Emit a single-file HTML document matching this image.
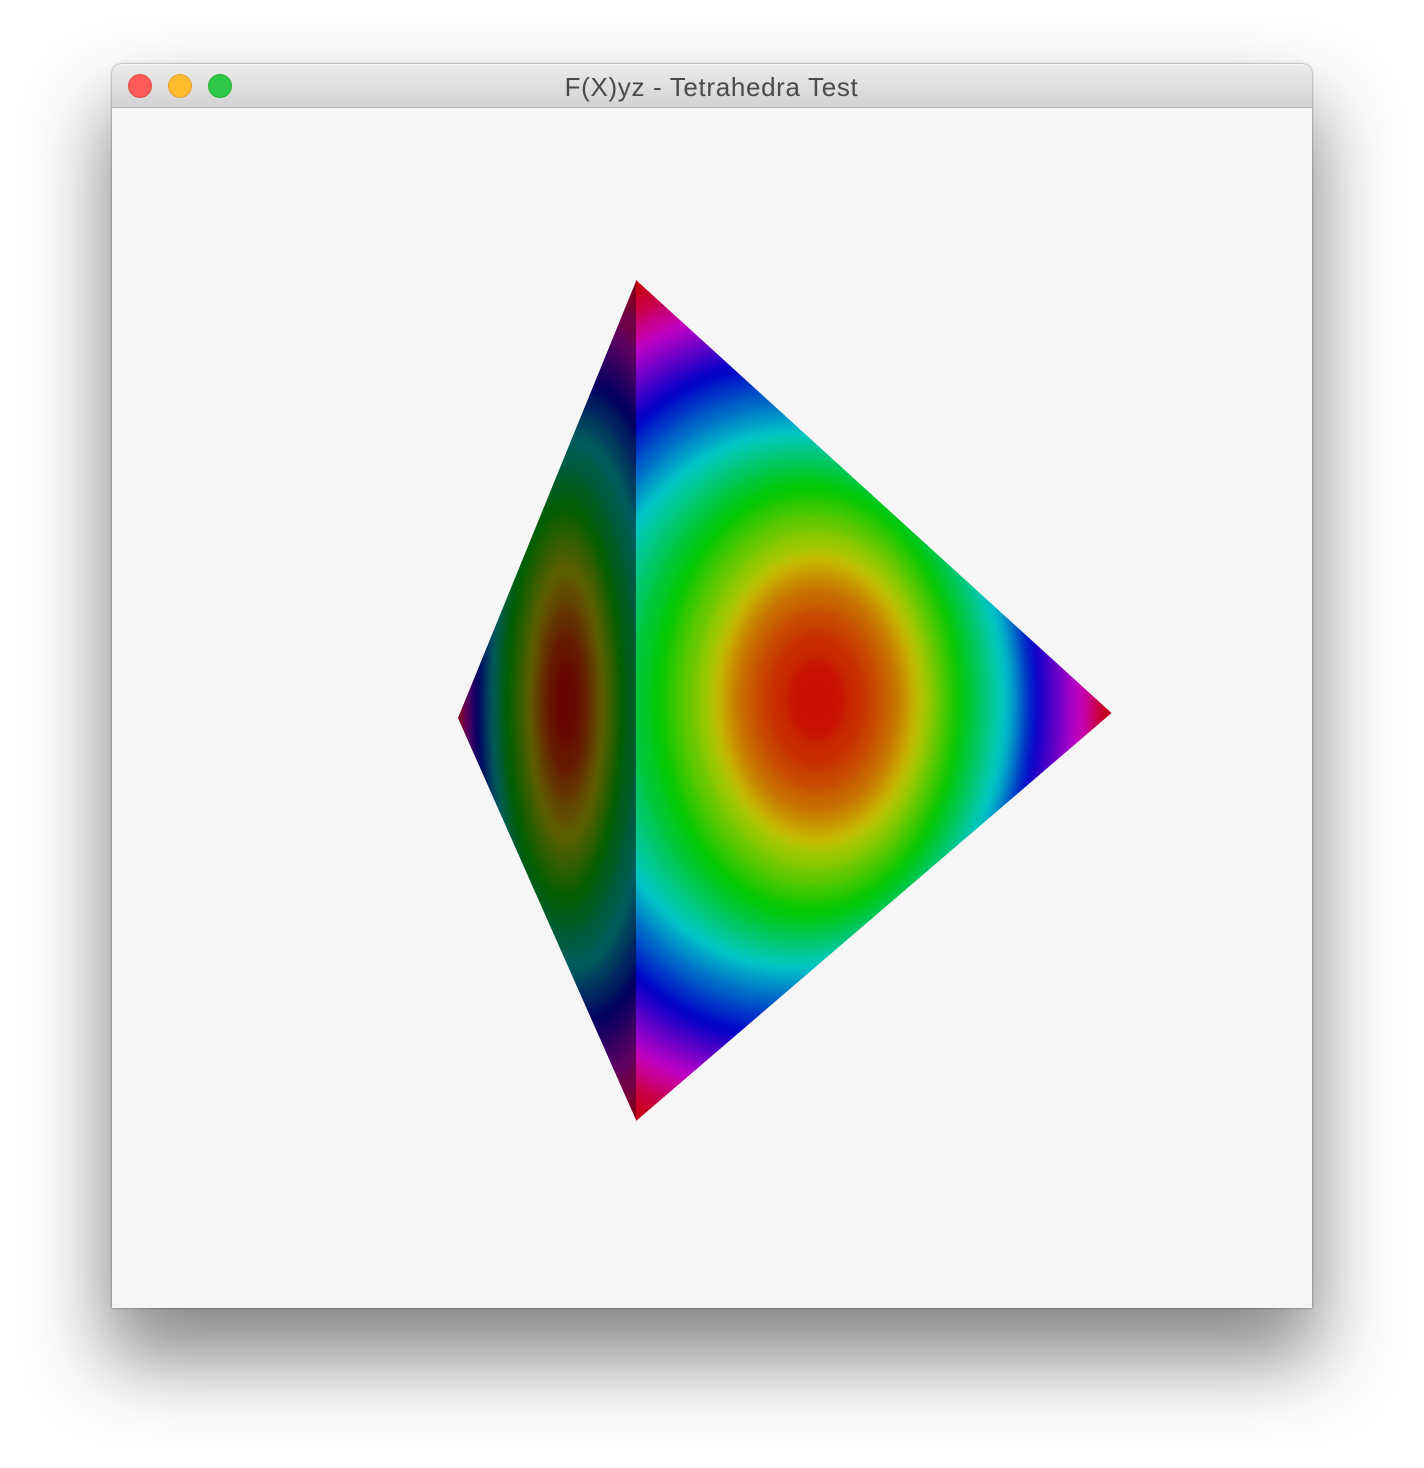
<!DOCTYPE html>
<html><head><meta charset="utf-8"><title>F(X)yz - Tetrahedra Test</title>
<style>
html,body{margin:0;padding:0;width:1424px;height:1468px;overflow:hidden;background:#fff}
#win{position:absolute;left:112px;top:64px;width:1200px;height:1244px;background:#f6f6f6;border-radius:10px 10px 0 0;box-shadow:0 46px 80px 6px rgba(0,0,0,.47),0 0 2px rgba(0,0,0,.55)}
#bar{position:absolute;left:0;top:0;width:1200px;height:43px;border-bottom:1px solid #b4b4b4;border-radius:10px 10px 0 0;background:linear-gradient(#ececec,#d3d3d3);box-shadow:inset 0 1px 0 #f4f4f4}
.l{position:absolute;top:10px;width:22px;height:22px;border-radius:50%;border:1px solid}
#t{position:absolute;left:0;top:6px;width:1199px;text-align:center;font:26px/34px "Liberation Sans",sans-serif;letter-spacing:.66px;color:#4a4a4a;white-space:nowrap}
svg{position:absolute;left:0;top:0}
</style></head><body>
<div id="win"><div id="bar">
<div class="l" style="left:16px;background:#fc5b57;border-color:#e24b41"></div>
<div class="l" style="left:56px;background:#ffbc2f;border-color:#e0a32b"></div>
<div class="l" style="left:96px;background:#30c849;border-color:#27ab37"></div>
<div id="t">F(X)yz - Tetrahedra Test</div>
</div></div>
<svg width="1424" height="1468" viewBox="0 0 1424 1468">
<defs>
<clipPath id="cr"><polygon points="636,280 1111.5,713 636,1121"/></clipPath>
<clipPath id="cl"><polygon points="636.5,280 458,718 636.5,1121"/></clipPath>
<filter id="br" x="-20%" y="-20%" width="140%" height="140%" color-interpolation-filters="sRGB"><feGaussianBlur stdDeviation="6"/></filter>
<filter id="bl" x="-20%" y="-20%" width="140%" height="140%" color-interpolation-filters="sRGB"><feGaussianBlur stdDeviation="3 7"/></filter>
</defs>
<g clip-path="url(#cl)"><g filter="url(#bl)">
<rect x="400" y="220" width="300" height="960" fill="#800020"/>
<g>
<ellipse cx="600" cy="703" rx="141" ry="434" fill="#800020"/>
<ellipse cx="595" cy="703" rx="133" ry="410" fill="#700046"/>
<ellipse cx="590" cy="703" rx="125" ry="387" fill="#600060"/>
<ellipse cx="588" cy="703" rx="120" ry="367" fill="#400062"/>
<ellipse cx="587" cy="703" rx="115" ry="347" fill="#200062"/>
<ellipse cx="585" cy="703" rx="110" ry="327" fill="#00005f"/>
<ellipse cx="582" cy="703" rx="102" ry="309" fill="#002060"/>
<ellipse cx="578" cy="703" rx="93" ry="291" fill="#003e5e"/>
<ellipse cx="575" cy="703" rx="85" ry="273" fill="#005c5c"/>
<ellipse cx="572" cy="703" rx="77" ry="251" fill="#005c40"/>
<ellipse cx="568" cy="703" rx="69" ry="229" fill="#005d20"/>
<ellipse cx="565" cy="703" rx="61" ry="207" fill="#005e00"/>
<ellipse cx="565" cy="703" rx="54" ry="187" fill="#1f5e00"/>
<ellipse cx="566" cy="703" rx="47" ry="166" fill="#3f5e00"/>
<ellipse cx="566" cy="703" rx="40" ry="145" fill="#5c5e00"/>
<ellipse cx="566" cy="703" rx="34" ry="122" fill="#624a00"/>
<ellipse cx="566" cy="703" rx="28" ry="98" fill="#643000"/>
<ellipse cx="566" cy="703" rx="21" ry="74" fill="#661800"/>
<ellipse cx="566" cy="703" rx="13" ry="46" fill="#660800"/>
</g></g></g>
<g clip-path="url(#cr)"><g filter="url(#br)">
<rect x="580" y="220" width="600" height="960" fill="#c80018"/>
<ellipse cx="760" cy="700" rx="350" ry="449" fill="#c80018"/>
<ellipse cx="763" cy="700" rx="338" ry="432" fill="#c80040"/>
<ellipse cx="767" cy="700" rx="327" ry="415" fill="#c80088"/>
<ellipse cx="770" cy="700" rx="315" ry="398" fill="#c400c4"/>
<ellipse cx="772" cy="700" rx="301" ry="385" fill="#9600c8"/>
<ellipse cx="775" cy="700" rx="288" ry="372" fill="#6400c8"/>
<ellipse cx="777" cy="700" rx="274" ry="358" fill="#3200c8"/>
<ellipse cx="780" cy="700" rx="260" ry="345" fill="#0000c8"/>
<ellipse cx="783" cy="700" rx="249" ry="328" fill="#0032c8"/>
<ellipse cx="786" cy="700" rx="238" ry="310" fill="#0064c8"/>
<ellipse cx="790" cy="700" rx="228" ry="292" fill="#0096c8"/>
<ellipse cx="793" cy="700" rx="217" ry="275" fill="#00c8c8"/>
<ellipse cx="796" cy="700" rx="202" ry="261" fill="#00c896"/>
<ellipse cx="800" cy="700" rx="187" ry="248" fill="#00c864"/>
<ellipse cx="803" cy="700" rx="172" ry="234" fill="#00c832"/>
<ellipse cx="807" cy="700" rx="157" ry="220" fill="#00c800"/>
<ellipse cx="810" cy="700" rx="145" ry="204" fill="#32c800"/>
<ellipse cx="812" cy="700" rx="132" ry="187" fill="#64c800"/>
<ellipse cx="815" cy="700" rx="119" ry="169" fill="#96c800"/>
<ellipse cx="817" cy="700" rx="106" ry="150" fill="#c4c400"/>
<ellipse cx="817" cy="700" rx="98" ry="139" fill="#c8a800"/>
<ellipse cx="817" cy="700" rx="90" ry="127" fill="#c88800"/>
<ellipse cx="817" cy="700" rx="80" ry="113" fill="#c86800"/>
<ellipse cx="817" cy="700" rx="66" ry="93" fill="#c84800"/>
<ellipse cx="817" cy="700" rx="50" ry="71" fill="#c82c00"/>
<ellipse cx="817" cy="700" rx="30" ry="42" fill="#c81000"/>
</g></g>
</svg>
</body></html>
